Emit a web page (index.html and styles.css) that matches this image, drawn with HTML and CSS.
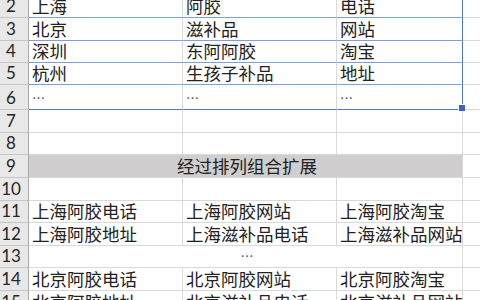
FILE: index.html
```html
<!DOCTYPE html>
<html>
<head>
<meta charset="utf-8">
<link rel="stylesheet" href="styles.css">
</head>
<body>
<div class="sheet">
  <div class="rh">2</div><div class="c sel">上海</div><div class="c sel">阿胶</div><div class="c sel last">电话</div><div class="c d"></div>
  <div class="rh">3</div><div class="c sel">北京</div><div class="c sel">滋补品</div><div class="c sel last">网站</div><div class="c d"></div>
  <div class="rh">4</div><div class="c sel">深圳</div><div class="c sel">东阿阿胶</div><div class="c sel last">淘宝</div><div class="c d"></div>
  <div class="rh">5</div><div class="c sel">杭州</div><div class="c sel">生孩子补品</div><div class="c sel last">地址</div><div class="c d"></div>
  <div class="rh">6</div><div class="c selb dots">…</div><div class="c selb dots">…</div><div class="c selb last dots handle-cell">…<span class="handle"></span></div><div class="c d"></div>
  <div class="rh">7</div><div class="c"></div><div class="c"></div><div class="c"></div><div class="c d"></div>
  <div class="rh">8</div><div class="c"></div><div class="c"></div><div class="c"></div><div class="c d"></div>
  <div class="rh">9</div><div class="c merged grey">经过排列组合扩展</div><div class="c d"></div>
  <div class="rh">10</div><div class="c"></div><div class="c"></div><div class="c"></div><div class="c d"></div>
  <div class="rh">11</div><div class="c">上海阿胶电话</div><div class="c">上海阿胶网站</div><div class="c">上海阿胶淘宝</div><div class="c d"></div>
  <div class="rh">12</div><div class="c">上海阿胶地址</div><div class="c">上海滋补品电话</div><div class="c">上海滋补品网站</div><div class="c d"></div>
  <div class="rh">13</div><div class="c merged dots2">…</div><div class="c d"></div>
  <div class="rh">14</div><div class="c">北京阿胶电话</div><div class="c">北京阿胶网站</div><div class="c">北京阿胶淘宝</div><div class="c d"></div>
  <div class="rh">15</div><div class="c">北京阿胶地址</div><div class="c">北京滋补品电话</div><div class="c">北京滋补品网站</div><div class="c d"></div>
</div>
</body>
</html>
```

FILE: styles.css
```css
html, body {
  margin: 0;
  padding: 0;
  background: #ffffff;
  overflow: hidden;
}
.sheet {
  display: grid;
  grid-template-columns: 29px 154px 154px 126px 40px;
  grid-template-rows: 23px 23px 22px 22px 25px 23px 22px 23px 23px 22px 23px 22px 23px 23px;
  margin-top: -5px;
  width: 503px;
}
.rh {
  box-sizing: border-box;
  background: #e8e8e8;
  border-right: 1px solid #a9a9a9;
  border-bottom: 1px solid #c6c6c6;
  font-family: "Lato", "Liberation Sans", sans-serif;
  font-size: 17px;
  color: #262626;
  display: flex;
  align-items: flex-end;
  justify-content: center;
  padding-right: 6px;
  line-height: 20px;
  padding-bottom: 1px;
}
.c {
  box-sizing: border-box;
  border-right: 1px solid #d9d9d9;
  border-bottom: 1px solid #d9d9d9;
  font-family: "Noto Sans CJK SC", sans-serif;
  font-size: 17.5px;
  color: #222222;
  line-height: 20px;
  padding: 0 0 1px 3px;
  display: flex;
  align-items: flex-end;
  white-space: nowrap;
  overflow: hidden;
}
.sel {
  border-bottom-color: #7f9fdc;
}
.selb {
  border-bottom-color: #4f77cf;
}
.last {
  border-right-color: #4f77cf;
}
.dots {
  font-size: 13px;
  color: #555;
}
.handle-cell {
  position: relative;
  overflow: visible;
}
.handle {
  position: absolute;
  right: -3px;
  bottom: -2px;
  width: 6px;
  height: 6px;
  background: #3d64c0;
  border-left: 1px solid #fff;
  border-top: 1px solid #fff;
}
.merged {
  grid-column: span 3;
  justify-content: center;
}
.grey {
  background: #d0cece;
}
.dots2 {
  font-size: 13px;
  color: #555;
}
.d {
  border-right: none;
}
```
